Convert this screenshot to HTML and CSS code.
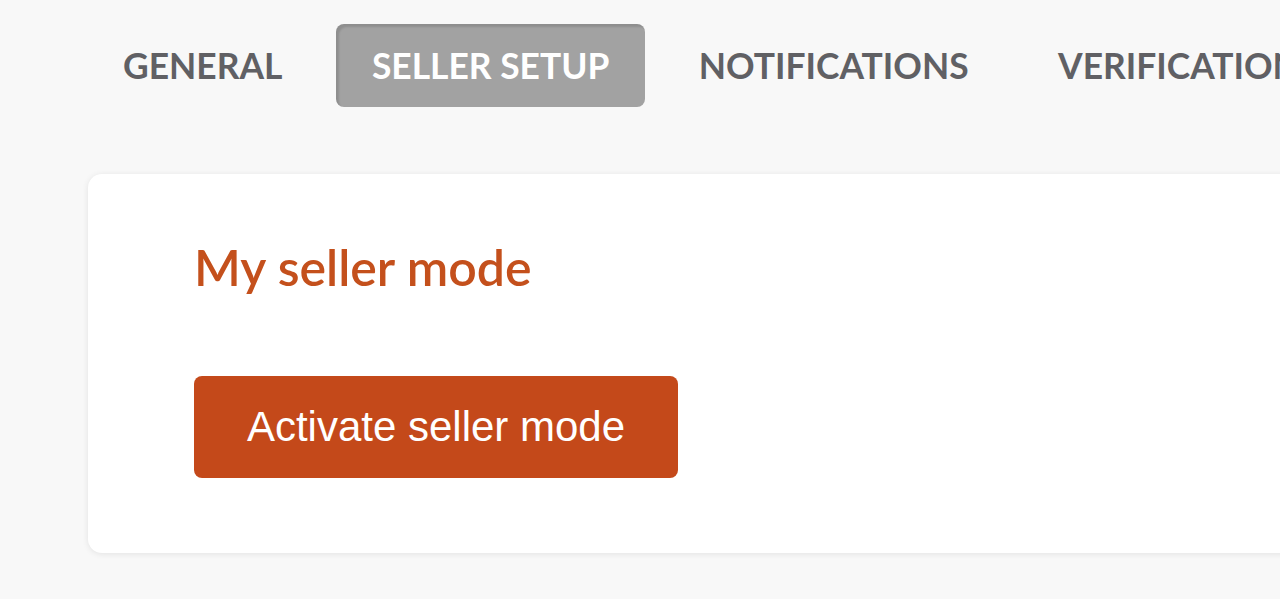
FILE: index.html
```html
<!DOCTYPE html>
<html>
<head>
<meta charset="utf-8">
<link rel="stylesheet" href="styles.css">
</head>
<body>
<nav class="tabs">
  <div class="tab">GENERAL</div>
  <div class="tab active">SELLER SETUP</div>
  <div class="tab">NOTIFICATIONS</div>
  <div class="tab">VERIFICATIONS</div>
</nav>
<section class="card">
  <h2 class="card-title">My seller mode</h2>
  <button class="btn-primary">Activate seller mode</button>
</section>
</body>
</html>
```
FILE: styles.css
```css
html, body {
  margin: 0;
  padding: 0;
  background: #f8f8f8;
  overflow: hidden;
  width: 1280px;
  height: 599px;
}
.tabs {
  display: flex;
  gap: 17.5px;
  padding: 24px 0 0 87px;
  white-space: nowrap;
}
.tab {
  height: 83px;
  padding: 0 36px;
  display: flex;
  align-items: center;
  font-family: "Lato", sans-serif;
  font-weight: 700;
  font-size: 35.4px;
  color: #606064;
  border-radius: 8px;
  box-sizing: border-box;
}
.tab.active {
  background: #a2a2a2;
  color: #ffffff;
  box-shadow: inset 3px 3px 2px rgba(0,0,0,0.12);
}
.card {
  margin: 67px 0 0 88px;
  width: 1300px;
  height: 379px;
  box-sizing: border-box;
  background: #ffffff;
  border-radius: 14px;
  box-shadow: 0 1px 6px rgba(0,0,0,0.09);
  padding: 0 0 0 106px;
  display: flex;
  flex-direction: column;
  align-items: flex-start;
}
.card-title {
  margin: 63px 0 0 0;
  font-family: "Lato", sans-serif;
  font-weight: 600;
  font-size: 50px;
  line-height: 60px;
  color: #c4501c;
}
.btn-primary {
  margin-top: 79px;
  width: 484px;
  height: 102px;
  border: none;
  border-radius: 8px;
  background: #c4491a;
  color: #ffffff;
  font-family: "Liberation Sans", Arial, sans-serif;
  font-size: 42px;
  padding: 0;
}
```
